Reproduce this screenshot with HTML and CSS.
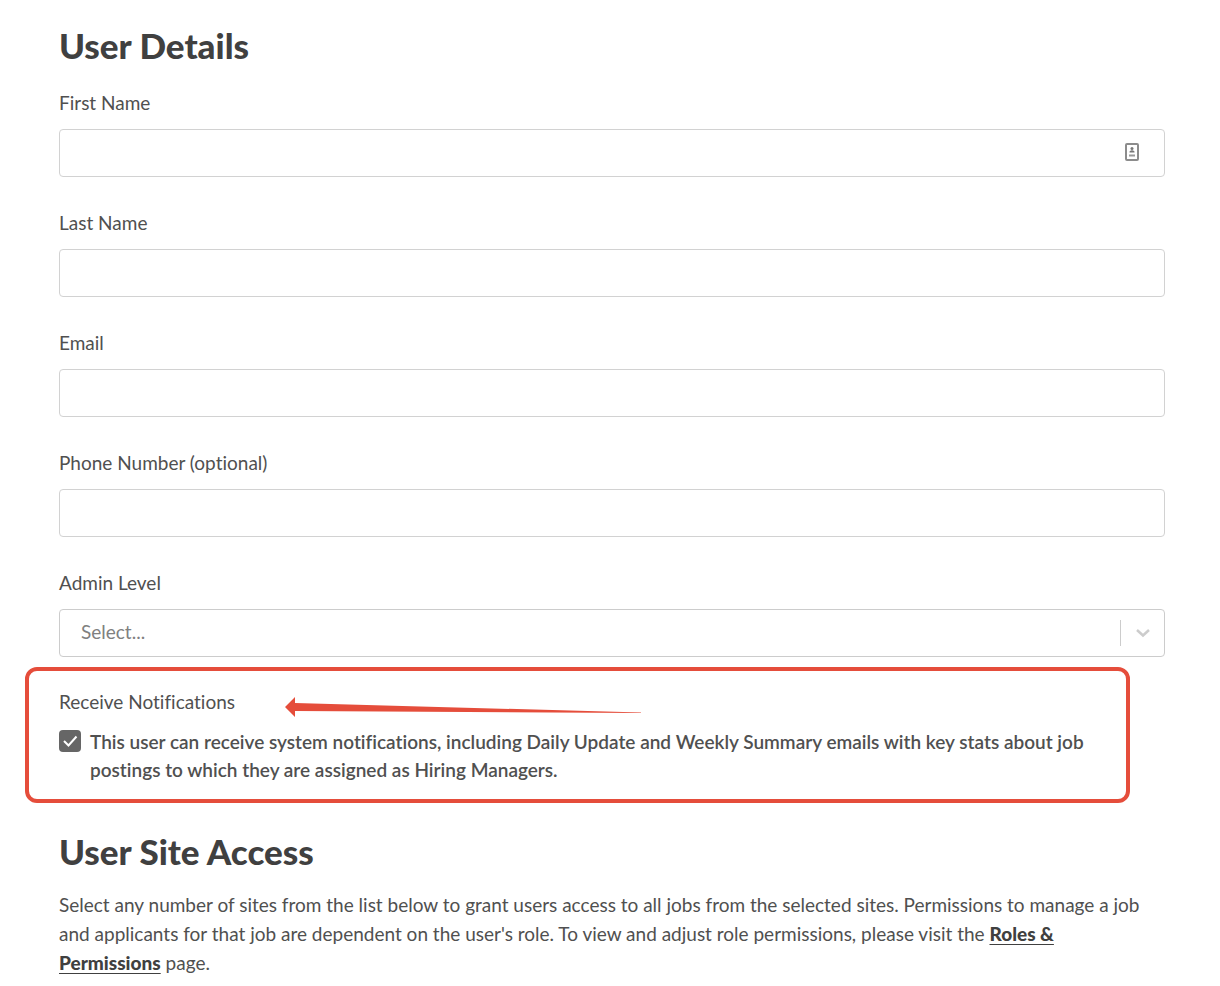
FILE: index.html
```html
<!DOCTYPE html>
<html lang="en">
<head>
<meta charset="utf-8">
<meta name="viewport" content="width=device-width, initial-scale=1">
<title>User Details</title>
<link rel="stylesheet" href="styles.css">
</head>
<body>
<main class="page">
  <form class="form">
    <h1 class="heading">User Details</h1>
    <div class="field">
      <label class="label" for="first-name">First Name</label>
      <div class="control">
        <input class="input" id="first-name" type="text">
        <svg class="contact-icon" viewBox="0 0 14 18" aria-hidden="true">
          <rect x="1" y="1" width="12" height="16" rx="1" fill="none" stroke="#8c8c8c" stroke-width="2"/>
          <circle cx="7" cy="5.5" r="1.5" fill="#777"/>
          <path d="M4.5 9.5V8.500Q7 6 9.500 8.500V9.500Z" fill="#777"/>
          <path d="M4 12.500H10" stroke="#999" stroke-width="2"/>
        </svg>
      </div>
    </div>
    <div class="field">
      <label class="label" for="last-name">Last Name</label>
      <input class="input" id="last-name" type="text">
    </div>
    <div class="field">
      <label class="label" for="email">Email</label>
      <input class="input" id="email" type="email">
    </div>
    <div class="field">
      <label class="label" for="phone">Phone Number (optional)</label>
      <input class="input" id="phone" type="tel">
    </div>
    <div class="field">
      <label class="label" for="admin-level">Admin Level</label>
      <div class="control">
        <select class="input select" id="admin-level"><option>Select...</option></select>
        <span class="indicator" aria-hidden="true">
          <svg class="chevron" viewBox="0 0 16 10"><path d="M2 2L8 7.500L14 2" fill="none" stroke="#ccc" stroke-width="2.500"/></svg>
        </span>
      </div>
    </div>
    <section class="callout">
      <div class="callout-head">
        <h2 class="label">Receive Notifications</h2>
        <svg class="arrow" viewBox="0 0 356 20" aria-hidden="true"><path d="M0 10L10 0V6L356 15.500V16L10 14V20Z" fill="#e54d3b"/></svg>
      </div>
      <label class="check-row" for="notify">
        <span class="check">
          <input class="check-input" id="notify" type="checkbox" checked>
          <svg class="check-mark" viewBox="0 0 22 22" aria-hidden="true"><path d="M5 11L9.500 15.500L17.500 6.500" fill="none" stroke="#fff" stroke-width="2"/></svg>
        </span>
        <span class="check-text">This user can receive system notifications, including Daily Update and Weekly Summary emails with key stats about job postings to which they are assigned as Hiring Managers.</span>
      </label>
    </section>
  </form>
  <section class="access">
    <h1 class="heading">User Site Access</h1>
    <p class="text">Select any number of sites from the list below to grant users access to all jobs from the selected sites. Permissions to manage a job and applicants for that job are dependent on the user's role. To view and adjust role permissions, please visit the <a class="link" href="#roles">Roles &amp;<br>Permissions</a> page.</p>
  </section>
</main>
</body>
</html>
```
FILE: styles.css
```css
* { box-sizing: border-box; }

body {
  margin: 0;
  background: #fff;
  color: #505050;
  font-family: Lato, "Liberation Sans", sans-serif;
  font-size: 19px;
  font-variant-ligatures: none;
}

.page { padding: 25px 55px 8px 59px; }

.form { display: flex; flex-direction: column; }

.heading {
  margin: 0 0 26px;
  color: #404040;
  font-size: 35px;
  font-weight: 900;
  line-height: 40px;
}

.field {
  display: flex;
  flex-direction: column;
  gap: 14px;
  margin-bottom: 34px;
}

.field:nth-last-of-type(1) { margin-bottom: 10px; }

.label {
  margin: 0;
  font-size: 19px;
  font-weight: 400;
  line-height: 24px;
}

.control { display: grid; align-items: center; }
.control > * { grid-area: 1 / 1; }

.input {
  width: 100%;
  height: 48px;
  padding: 0 21px;
  border: 1px solid #d2d2d2;
  border-radius: 4px;
  background: #fff;
  color: #505050;
  font: inherit;
}

.contact-icon {
  justify-self: end;
  width: 14px;
  height: 18px;
  margin: 0 26px 2px 0;
}

.select {
  appearance: none;
  padding-bottom: 3px;
  border-color: #ccc;
  color: #808080;
}

.indicator {
  display: flex;
  justify-self: end;
  align-items: center;
  justify-content: center;
  width: 45px;
  height: 26px;
  border-left: 1px solid #ccc;
  pointer-events: none;
}

.chevron { width: 16px; height: 10px; }

.callout {
  margin: 0 35px 0 -34px;
  padding: 19px 24px 15px 30px;
  border: 4px solid #e54d3b;
  border-radius: 12px;
}

.callout-head { display: flex; align-items: center; gap: 50px; height: 24px; }

.arrow { width: 356px; height: 20px; margin-top: 10px; }

.check-row {
  display: flex;
  gap: 9px;
  margin-top: 14px;
}

.check { display: grid; flex: none; padding-top: 2px; }
.check > * { grid-area: 1 / 1; width: 22px; height: 22px; margin: 0; }

.check-input {
  appearance: none;
  border-radius: 4px;
  background: #666;
}

.check-mark { pointer-events: none; }

.check-text { font-weight: 600; line-height: 28px; }

.access { margin-top: 28px; }
.access .heading { margin-bottom: 19px; }

.text { margin: 0; line-height: 29px; }

.link { color: #404040; font-weight: 900; text-underline-offset: 3px; }
```
